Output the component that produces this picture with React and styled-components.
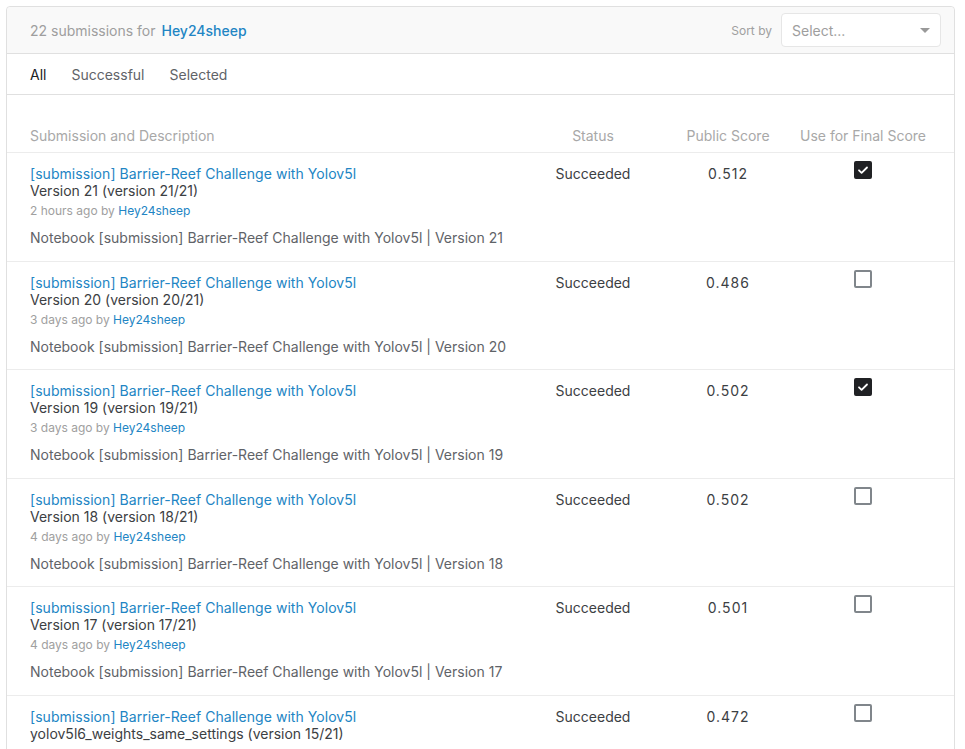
import React from 'react';
import styled, { createGlobalStyle } from 'styled-components';

const GlobalStyle = createGlobalStyle`
  body {
    margin: 0;
    background: #ffffff;
    font-family: Inter, 'Noto Sans', sans-serif;
    color: #3c4043;
  }
`;

const submissions = [
  { version: 'Version 21 (version 21/21)', when: '2 hours ago', note: 'Version 21', score: '0.512', selected: true },
  { version: 'Version 20 (version 20/21)', when: '3 days ago', note: 'Version 20', score: '0.486', selected: false },
  { version: 'Version 19 (version 19/21)', when: '3 days ago', note: 'Version 19', score: '0.502', selected: true },
  { version: 'Version 18 (version 18/21)', when: '4 days ago', note: 'Version 18', score: '0.502', selected: false },
  { version: 'Version 17 (version 17/21)', when: '4 days ago', note: 'Version 17', score: '0.501', selected: false },
  { version: 'yolov5l6_weights_same_settings (version 15/21)', when: '4 days ago', note: 'Version 15', score: '0.472', selected: false },
];

const App = () => {
  return (
    <>
      <GlobalStyle />
      <Page>
        <Panel>
          <Header>
            <Count>
              22 submissions for <UserLink>Hey24sheep</UserLink>
            </Count>
            <SortWrap>
              <SortLabel>Sort by</SortLabel>
              <SelectBox>
                <span>Select...</span>
                <Caret />
              </SelectBox>
            </SortWrap>
          </Header>
          <Tabs>
            <Tab $active>All</Tab>
            <Tab>Successful</Tab>
            <Tab>Selected</Tab>
          </Tabs>
          <HeadRow>
            <HeadCell>Submission and Description</HeadCell>
            <HeadCell $center>Status</HeadCell>
            <HeadCell $center>Public Score</HeadCell>
            <HeadCell $center>Use for Final Score</HeadCell>
          </HeadRow>
          {submissions.map((sub, index) => (
            <Row key={index}>
              <Description>
                <Title>[submission] Barrier-Reef Challenge with Yolov5l</Title>
                <Version>{sub.version}</Version>
                <Meta>
                  {sub.when} by <MetaLink>Hey24sheep</MetaLink>
                </Meta>
                <Note>
                  Notebook [submission] Barrier-Reef Challenge with Yolov5l | {sub.note}
                </Note>
              </Description>
              <Cell>Succeeded</Cell>
              <Score>{sub.score}</Score>
              <CheckCell>
                <Checkbox $checked={sub.selected}>
                  {sub.selected && (
                    <svg width='12' height='12' viewBox='0 0 12 12'>
                      <path
                        d='M2 6.3l2.6 2.6L10 3.5'
                        fill='none'
                        stroke='#fff'
                        strokeWidth='1.8'
                        strokeLinecap='round'
                        strokeLinejoin='round'
                      />
                    </svg>
                  )}
                </Checkbox>
              </CheckCell>
            </Row>
          ))}
        </Panel>
      </Page>
    </>
  );
};

const Page = styled.div`
  padding: 6px 0 0 6px;
  height: 743px;
  overflow: hidden;
`;

const Panel = styled.div`
  width: 947px;
  border: 1px solid #e0e0e0;
  border-radius: 4px 4px 0 0;
  background: #fff;
`;

const Header = styled.div`
  display: flex;
  align-items: center;
  justify-content: space-between;
  height: 46px;
  padding: 0 13px 0 23px;
  background: #f9f9f9;
  border-bottom: 1px solid #e0e0e0;
  border-radius: 4px 4px 0 0;
`;

const Count = styled.div`
  font-size: 14px;
  color: #9e9e9e;
`;

const UserLink = styled.span`
  color: #2285c4;
  font-weight: 500;
  margin-left: 2px;
`;

const SortWrap = styled.div`
  display: flex;
  align-items: center;
  gap: 9px;
`;

const SortLabel = styled.span`
  font-size: 12px;
  color: #a0a0a0;
`;

const SelectBox = styled.div`
  display: flex;
  align-items: center;
  justify-content: space-between;
  width: 160px;
  height: 34px;
  box-sizing: border-box;
  padding: 0 10px 0 10px;
  background: #fff;
  border: 1px solid #e6e6e6;
  border-radius: 4px;
  font-size: 14px;
  color: #9e9e9e;
`;

const Caret = styled.span`
  width: 0;
  height: 0;
  border-left: 5px solid transparent;
  border-right: 5px solid transparent;
  border-top: 5px solid #999;
`;

const Tabs = styled.div`
  display: flex;
  align-items: center;
  gap: 25px;
  height: 40px;
  padding: 0 23px;
  border-bottom: 1px solid #e0e0e0;
`;

const Tab = styled.span`
  font-size: 14px;
  color: ${(p) => (p.$active ? '#202124' : '#5f6368')};
`;

const grid = `
  display: grid;
  grid-template-columns: 1fr 140px 130px 140px;
  padding: 0 21px 0 23px;
`;

const HeadRow = styled.div`
  ${grid}
  padding-top: 31px;
  padding-bottom: 6px;
  border-bottom: 1px solid #ececec;
`;

const HeadCell = styled.div`
  font-size: 14px;
  line-height: 20px;
  color: #a8a8a8;
  text-align: ${(p) => (p.$center ? 'center' : 'left')};
`;

const Row = styled.div`
  ${grid}
  padding-top: 12px;
  padding-bottom: 12.6px;
  border-bottom: 1px solid #ececec;
`;

const Description = styled.div`
  display: flex;
  flex-direction: column;
`;

const Title = styled.div`
  font-size: 14px;
  line-height: 17px;
  color: #2285c4;
  letter-spacing: 0.05px;
`;

const Version = styled.div`
  font-size: 14px;
  line-height: 17px;
  color: #3c4043;
`;

const Meta = styled.div`
  margin-top: 4px;
  font-size: 12px;
  line-height: 16px;
  color: #a0a0a0;
`;

const MetaLink = styled.span`
  color: #2285c4;
`;

const Note = styled.div`
  margin-top: 9px;
  font-size: 14px;
  line-height: 20px;
  color: #5f6368;
`;

const Cell = styled.div`
  font-size: 14px;
  line-height: 17px;
  color: #3c4043;
  text-align: center;
`;

const Score = styled(Cell)`
  letter-spacing: 1px;
`;

const CheckCell = styled.div`
  display: flex;
  justify-content: center;
  margin-top: -4px;
`;

const Checkbox = styled.div`
  width: 18px;
  height: 18px;
  box-sizing: border-box;
  display: flex;
  align-items: center;
  justify-content: center;
  border-radius: 2px;
  background: ${(p) => (p.$checked ? '#202124' : '#fff')};
  border: 2px solid ${(p) => (p.$checked ? '#202124' : '#80868b')};
`;

export default App;
